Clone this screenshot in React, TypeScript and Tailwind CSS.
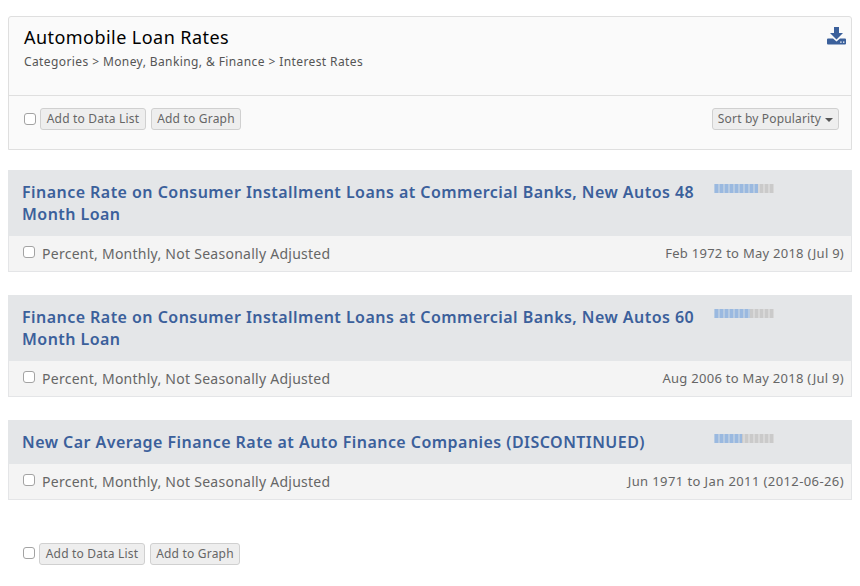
import React from "react";

const SERIES = [
  {
    title: ["Finance Rate on Consumer Installment Loans at Commercial Banks, New Autos 48", "Month Loan"],
    range: "Feb 1972 to May 2018 (Jul 9)",
    rangeTracking: "tracking-[0.26px]",
    popularity: 44,
  },
  {
    title: ["Finance Rate on Consumer Installment Loans at Commercial Banks, New Autos 60", "Month Loan"],
    range: "Aug 2006 to May 2018 (Jul 9)",
    rangeTracking: "tracking-[0.28px]",
    popularity: 36,
  },
  {
    title: ["New Car Average Finance Rate at Auto Finance Companies (DISCONTINUED)"],
    range: "Jun 1971 to Jan 2011 (2012-06-26)",
    rangeTracking: "tracking-[0.4px]",
    popularity: 28,
  },
];

function Checkbox({ className = "" }: { className?: string }) {
  return (
    <input
      type="checkbox"
      className={`block size-3 shrink-0 appearance-none rounded-[3px] border border-[#a3a3a3] bg-white ${className}`}
    />
  );
}

function Button({ className = "", children }: { className?: string; children: React.ReactNode }) {
  return (
    <button
      className={`flex h-[22px] shrink-0 items-center justify-center rounded-[3px] border border-[#d0d0d0] bg-[#eeeeee] text-[12px] leading-5 whitespace-nowrap text-[#666] ${className}`}
    >
      {children}
    </button>
  );
}

function Actions({ checkboxClass = "" }: { checkboxClass?: string }) {
  return (
    <div className="flex items-start">
      <Checkbox className={checkboxClass} />
      <Button className="ml-1 w-[106px] tracking-[0.2px]">Add to Data List</Button>
      <Button className="ml-[5px] w-[90px] tracking-[0.2px]">Add to Graph</Button>
    </div>
  );
}

function Popularity({ value }: { value: number }) {
  return (
    <div className="mt-3.5 flex h-[9px] w-[60px] bg-[#d8d8d8]">
      <svg width="60" height="9" shapeRendering="crispEdges">
        <rect width={value} height="9" fill="#b7cbe2" />
        {Array.from({ length: 12 }, (_, i) => (
          <g key={i}>
            <rect x={i * 5 + 1} width="3" height="9" fill="#cacaca" />
            <rect x={i * 5 + 1} width={Math.max(0, Math.min(3, value - i * 5 - 1))} height="9" fill="#9ab9e0" />
          </g>
        ))}
      </svg>
    </div>
  );
}

export default function App() {
  return (
    <div className="h-[586px] w-[860px] overflow-hidden bg-white px-2 pt-4 font-['Noto_Sans',sans-serif] text-[#555]">
      <header className="h-[134px] rounded-t-[3px] border border-[#dfdfdf] bg-[#fafafa]">
        <div className="flex h-[79px] justify-between border-b border-[#dfdfdf] pl-[15px]">
          <div className="whitespace-nowrap">
            <h1 className="mt-2 text-[18px] leading-6 tracking-[0.45px] text-black">Automobile Loan Rates</h1>
            <p className="mt-[3px] text-[12px] leading-5 tracking-[0.4px]">
              Categories &gt; Money, Banking, &amp; Finance &gt; Interest Rates
            </p>
          </div>
          <svg className="mt-2.5 mr-[5px]" width="19" height="18" viewBox="0 0 19 18" fill="#3b609b">
            <path d="M7 0h5v6h4L9.5 12.5 3 6h4z" />
            <path d="M1 11.5h5l3.5 3 3.5-3h5q1 0 1 1v4q0 1-1 1H1q-1 0-1-1v-4q0-1 1-1z" />
            <path d="M13.2 14.5h1.4v1.3h-1.4zM16 14.5h1.4v1.3H16z" fill="#fff" />
          </svg>
        </div>
        <div className="flex items-start justify-between pt-3 pr-3 pl-[15px]">
          <Actions checkboxClass="mt-[5px]" />
          <Button className="w-[127px] tracking-[0.17px]">
            <span>Sort by Popularity</span>
            <span className="mt-0.5 ml-1 border-x-4 border-t-4 border-x-transparent border-t-[#555]" />
          </Button>
        </div>
      </header>

      <main className="mt-5 flex flex-col gap-[23px]">
        {SERIES.map((s, n) => (
          <article key={n} className="border border-t-0 border-[#e4e5e7] bg-[#f4f4f4]">
            <div className="-mx-px flex bg-[#e4e6e8]">
              <h2 className="w-[706px] pt-[11px] pb-[11px] pl-3.5 text-[16px] leading-[22px] font-semibold tracking-[0.455px] whitespace-nowrap text-[#3b609b]">
                {s.title.map((t) => (
                  <span key={t} className="block">{t}</span>
                ))}
              </h2>
              <Popularity value={s.popularity} />
            </div>
            <div className="flex h-[35px] justify-between pr-[7px] pl-3.5 whitespace-nowrap">
              <div className="flex">
                <Checkbox className="mt-2.5" />
                <span className="mt-2 ml-[7px] text-[14px] leading-5 tracking-[0.26px] text-[#666]">
                  Percent, Monthly, Not Seasonally Adjusted
                </span>
              </div>
              <span className={`mt-[7px] text-[13px] leading-5 text-[#666] ${s.rangeTracking}`}>{s.range}</span>
            </div>
          </article>
        ))}
      </main>

      <footer className="mt-[43px] pl-[15px]">
        <Actions checkboxClass="mt-1" />
      </footer>
    </div>
  );
}
